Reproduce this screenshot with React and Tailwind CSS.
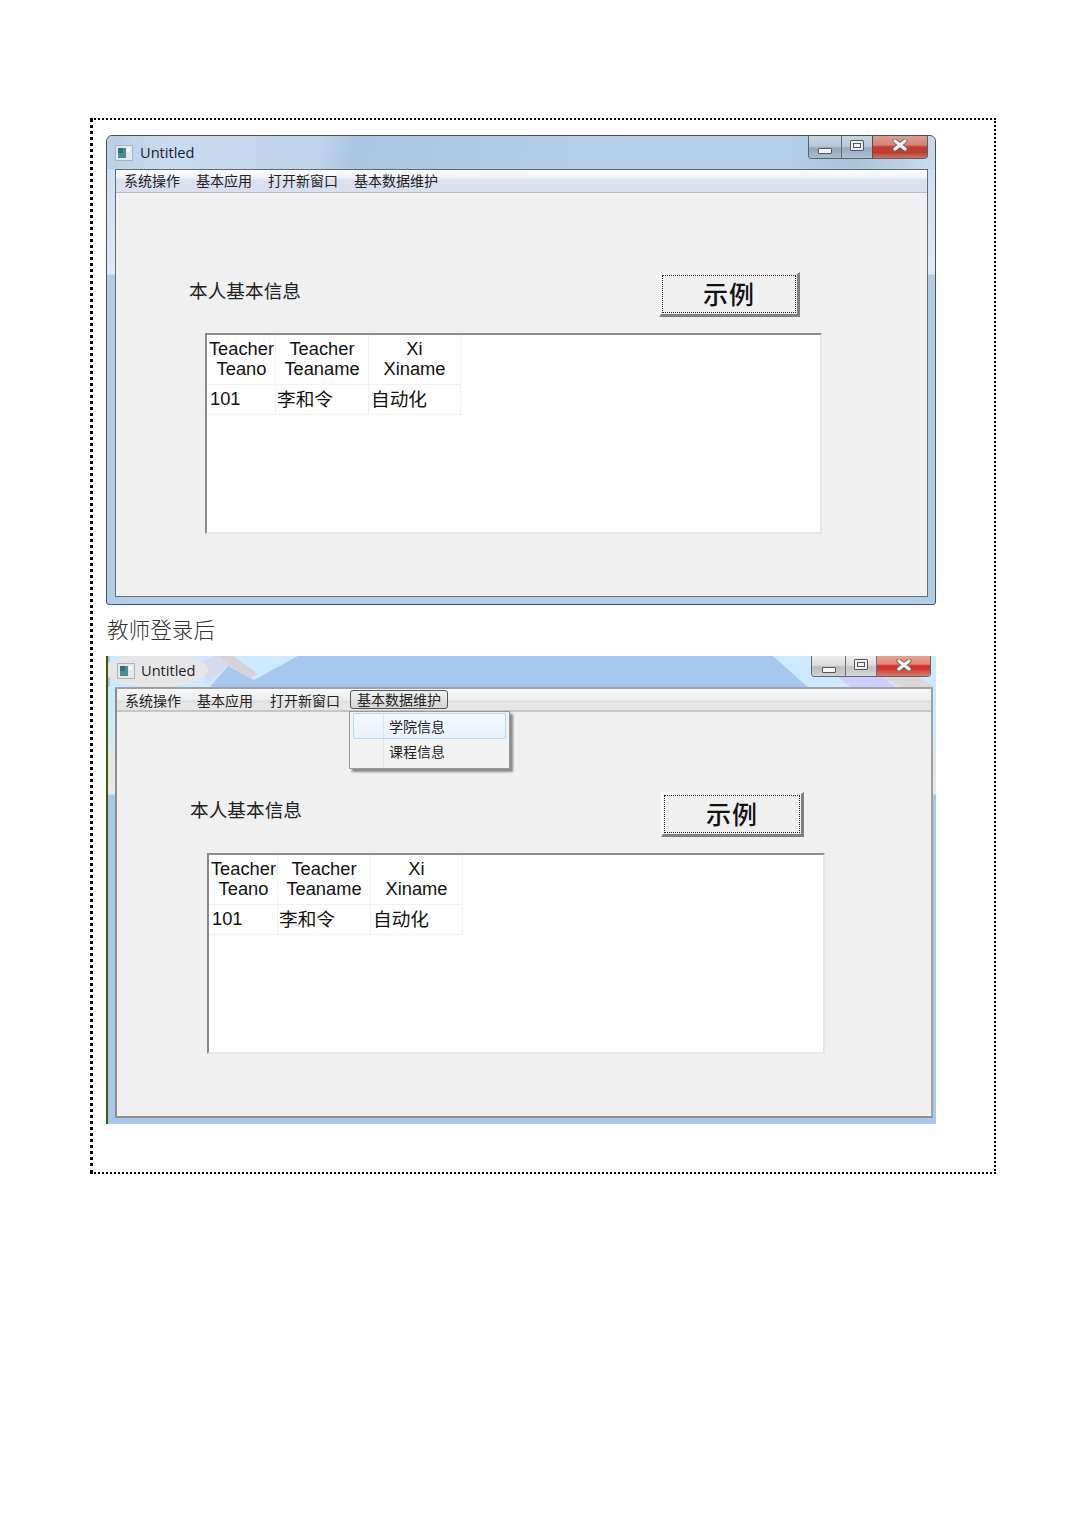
const CJK = { fontFamily: '"Noto Sans CJK SC", "Noto Sans", sans-serif' };

function AppIcon() {
  return (
    <svg width="18" height="16" viewBox="0 0 18 16" className="shrink-0">
      <rect x="0.5" y="0.5" width="17" height="15" fill="#e4e9ee" stroke="#aab4bc" />
      <rect x="3" y="3" width="8" height="10" fill="#4f8c8c" />
      <rect x="3" y="3" width="5" height="5" fill="#2f7080" />
      <rect x="12" y="3" width="3" height="4" fill="#f6f8fa" />
    </svg>
  );
}

function Controls({ second }) {
  return (
    <div className={second
      ? "flex h-[21px] w-[120px] overflow-hidden rounded-b-[4px] border border-t-0 border-[#5f666c]"
      : "flex h-[23px] w-[120px] overflow-hidden rounded-b-[4px] border border-t-0 border-[#56616c]"}>
      <div className={second
        ? "flex w-[34px] items-center justify-center border-r border-[#6d7378] bg-[linear-gradient(to_bottom,#eeeeee_0,#dddddd_45%,#b9bcbc_55%,#cfd2d2_100%)]"
        : "flex w-[33px] items-center justify-center border-r border-[#5f6c78] bg-[linear-gradient(to_bottom,#c5d5e4_0,#b9cadb_45%,#8fa6bb_55%,#a9bdd0_100%)]"}>
        <div className="mt-[7px] h-[6px] w-[14px] rounded-[1px] border border-[#555] bg-[#f2f4f6]" />
      </div>
      <div className={second
        ? "flex w-[31px] items-center justify-center border-r border-[#6d7378] bg-[linear-gradient(to_bottom,#eeeeee_0,#dddddd_45%,#c1c4c4_55%,#d8d8d8_100%)]"
        : "flex w-[31px] items-center justify-center border-r border-[#8c3a30] bg-[linear-gradient(to_bottom,#c5d5e4_0,#b9cadb_45%,#93aabf_55%,#b0c3d6_100%)]"}>
        <div className="mb-[4px] flex h-[11px] w-[14px] items-center justify-center rounded-[1px] border border-[#555] bg-[#eef1f4]">
          <div className="h-[5px] w-[8px] border border-[#555]" />
        </div>
      </div>
      <div className={second
        ? "flex flex-1 items-start justify-center bg-[linear-gradient(to_bottom,#e8a090_0,#e88878_40%,#d62a20_50%,#d63a30_65%,#cf7f70_100%)]"
        : "flex flex-1 items-start justify-center bg-[linear-gradient(to_bottom,#dd9d92_0,#d28478_40%,#c2402c_50%,#c23c2a_75%,#b97b70_100%)]"}>
        <svg width="16" height="12" viewBox="0 0 16 12" className="mt-[3px]">
          <path d="M3 2 L13 10 M13 2 L3 10" stroke="#666b6f" strokeWidth="5" strokeLinecap="round" />
          <path d="M3 2 L13 10 M13 2 L3 10" stroke="#f2f2f2" strokeWidth="3.2" strokeLinecap="round" />
        </svg>
      </div>
    </div>
  );
}

function Wallpaper() {
  return (
    <svg className="absolute left-0 top-0" width="830" height="33" viewBox="0 0 830 33">
      <rect width="830" height="33" fill="#a6c8ef" />
      <polygon points="2,0 190,0 146,24 120,10 100,33 2,33" fill="#cbe9ff" />
      <polygon points="105,0 125,0 150,18 142,22 118,8" fill="#d4d4d8" />
      <polygon points="90,6 112,0 120,8 100,28" fill="#d7d9ee" />
      <ellipse cx="48" cy="14" rx="52" ry="17" fill="#e6e6e6" />
      <polygon points="665,0 830,0 830,33 702,33" fill="#cbe9ff" />
      <polygon points="730,21 775,21 790,33 745,33" fill="#cfcfff" />
      <polygon points="770,18 800,14 830,33 795,33" fill="#d8d8d8" />
    </svg>
  );
}

const MENU = ["系统操作", "基本应用", "打开新窗口", "基本数据维护"];

function TeacherTable({ second }) {
  const cell = "border-r border-b border-[#f0f0f0]";
  return (
    <div className={second
      ? "ml-[90px] h-[201px] w-[618px] border-2 border-t-[#8a8a8a] border-l-[#8a8a8a] border-r-[#e6e6e6] border-b-[#e6e6e6] bg-white"
      : "ml-[89px] h-[201px] w-[617px] border-2 border-t-[#8a8a8a] border-l-[#8a8a8a] border-r-[#e6e6e6] border-b-[#e6e6e6] bg-white"}>
      <div className="grid w-[254px] grid-cols-[69px_93px_92px] grid-rows-[50px_30px] text-[18.3px] leading-[20px] text-[#111]" style={{ fontFamily: '"Liberation Sans", sans-serif' }}>
        <div className={`${cell} pl-[1px] pt-[4px] text-center whitespace-nowrap`}>Teacher<br />Teano</div>
        <div className={`${cell} pt-[4px] text-center whitespace-nowrap`}>Teacher<br />Teaname</div>
        <div className={`${cell} pt-[4px] text-center whitespace-nowrap`}>Xi<br />Xiname</div>
        <div className={`${cell} pl-[3px] pt-[4px]`}>101</div>
        <div className={`${cell} pl-[1px] pt-[3px] text-[18.67px]`} style={CJK}>李和令</div>
        <div className={`${cell} pl-[2px] pt-[3px] text-[18.67px]`} style={CJK}>自动化</div>
      </div>
    </div>
  );
}

function FormBody({ second }) {
  return (
    <div className="flex-1 bg-[#f0f0f0]">
      <div className={second ? "mt-[80px] flex items-start justify-between pl-[73px] pr-[127px]" : "mt-[79px] flex items-start justify-between pl-[73px] pr-[127px]"}>
        <div className={second ? "mt-[3px] text-[18.67px] leading-[28px] text-[#222]" : "mt-[4px] text-[18.67px] leading-[28px] text-[#222]"} style={CJK}>本人基本信息</div>
        <div className={second
          ? "flex h-[45px] w-[143px] border-2 border-r-[3px] border-b-[3px] border-t-[#fafafa] border-l-[#fafafa] border-r-[#808080] border-b-[#808080] p-[1px]"
          : "flex h-[45px] w-[141px] border-2 border-r-[3px] border-b-[3px] border-t-[#fafafa] border-l-[#fafafa] border-r-[#808080] border-b-[#808080] p-[1px]"}>
          <div className="flex flex-1 items-center justify-center border border-dotted border-[#222] pb-[2px] text-[25px] font-medium leading-none tracking-[1px] text-[#111]" style={CJK}>
            示例
          </div>
        </div>
      </div>
      <div className="mt-[16px]">
        <TeacherTable second={second} />
      </div>
    </div>
  );
}

function DropMenu() {
  return (
    <div className="absolute left-[232px] top-[22px] z-10 flex h-[58px] w-[161px] flex-col border border-[#9a9a9a] bg-[#f2f2f2] p-[1px] shadow-[3px_3px_2px_#8c8c8c]">
      <div className="relative mx-[2px] flex h-[26px] shrink-0 items-center rounded-[2px] border border-[#b8d6f6] bg-[linear-gradient(to_bottom,#f6f9fd,#e9f1fb)] pl-[35px] text-[14px] text-[#222]" style={CJK}>
        <span className="absolute left-[29px] top-0 h-full w-px bg-[#e0e3e8]" />
        学院信息
      </div>
      <div className="relative flex flex-1 items-center pb-[3px] pl-[38px] text-[14px] text-[#222]" style={CJK}>
        <span className="absolute left-[32px] top-0 h-full w-px bg-[#e4e4e4]" />
        课程信息
      </div>
    </div>
  );
}

function WindowFrame({ second }) {
  return (
    <div className={second
      ? "relative flex h-[468px] w-[830px] flex-col border-l-2 border-[#3c5a00] bg-[linear-gradient(to_bottom,#cbe9ff_0,#cbe9ff_70px,#e4e4e4_100px,#e8e8e8_138px,#a6c8ef_139px,#a6c8ef_100%)]"
      : "relative flex h-[470px] w-[830px] flex-col rounded-t-[6px] rounded-b-[3px] border border-[#47525c] bg-[linear-gradient(to_bottom,#c7dcef_0,#dfeaf5_138px,#b0cce8_139px,#b0cce8_100%)]"}>
      <div className={second
        ? "relative flex h-[31px] items-start justify-between overflow-hidden pl-[9px] pr-[5px]"
        : "flex h-[33px] items-start justify-between rounded-t-[6px] bg-[linear-gradient(100deg,#b6cfe5_0,#c8dcf0_8%,#bdd3ea_26%,#a9c6e2_30%,#b3cfe9_60%,#b6d2ea_80%,#a9c4dc_90%,#c7dbed_100%)] pl-[8px] pr-[7px]"}>
        {second && <Wallpaper />}
        <div className={second ? "relative mt-[6px] flex items-center gap-[6px]" : "mt-[8px] flex items-center gap-[7px]"}>
          <AppIcon />
          <span className="pb-[2px] text-[14.6px] leading-[16px] text-[#1a1a2a]" style={{ fontFamily: '"Open Sans", sans-serif' }}>Untitled</span>
        </div>
        <div className="relative"><Controls second={second} /></div>
      </div>
      <div className={second
        ? "relative ml-[7px] mr-[3px] mb-[6px] flex flex-1 flex-col border-2 border-[#8d8d8d] border-t-[#a0a0a0] border-r-[#a0a0a0] bg-[#f0f0f0]"
        : "relative ml-[8px] mr-[7px] mb-[7px] flex flex-1 flex-col border border-[#626c76] bg-[#f0f0f0]"}>
        <div className={second
          ? "flex h-[23px] shrink-0 items-center gap-[16px] border-b-2 border-[#c6c6c6] bg-[linear-gradient(to_bottom,#f8f8f8_0,#ececec_50%,#d9dfe0_60%,#e6e6e6_70%,#e6e6e6_100%)] pl-[8px] text-[14px] text-[#222]"
          : "flex h-[23px] shrink-0 items-center gap-[16px] border-b border-[#b4b9cc] bg-[linear-gradient(to_bottom,#ffffff_0,#eef0f7_35%,#dce1f0_45%,#d9dff0_100%)] pb-[2px] pl-[8px] text-[14px] text-[#222]"} style={CJK}>
          {MENU.map((m, i) => {
            if (second && i === 3) {
              return <span key={m} className="-ml-[6px] flex h-[19px] w-[98px] items-center justify-center rounded-[3px] border border-[#555] bg-[linear-gradient(to_bottom,#f0f0f0,#d4d4d4)]">{m}</span>;
            }
            if (second && i === 2) {
              return <span key={m} className="ml-[1px] leading-none">{m}</span>;
            }
            return <span key={m} className="leading-none">{m}</span>;
          })}
        </div>
        {second && <DropMenu />}
        <FormBody second={second} />
      </div>
    </div>
  );
}

export default function App() {
  return (
    <div className="min-h-[1536px] bg-white pl-[90px] pt-[118px]">
      <div className="h-[1056px] w-[906px] border-2 border-l-[3px] border-dotted border-black pl-[13px] pt-[15px]">
        <WindowFrame />
        <div className="flex h-[51px] items-center pb-[4px] pl-[1px] text-[21.6px] font-light leading-none text-[#333]" style={CJK}>教师登录后</div>
        <WindowFrame second />
      </div>
    </div>
  );
}
